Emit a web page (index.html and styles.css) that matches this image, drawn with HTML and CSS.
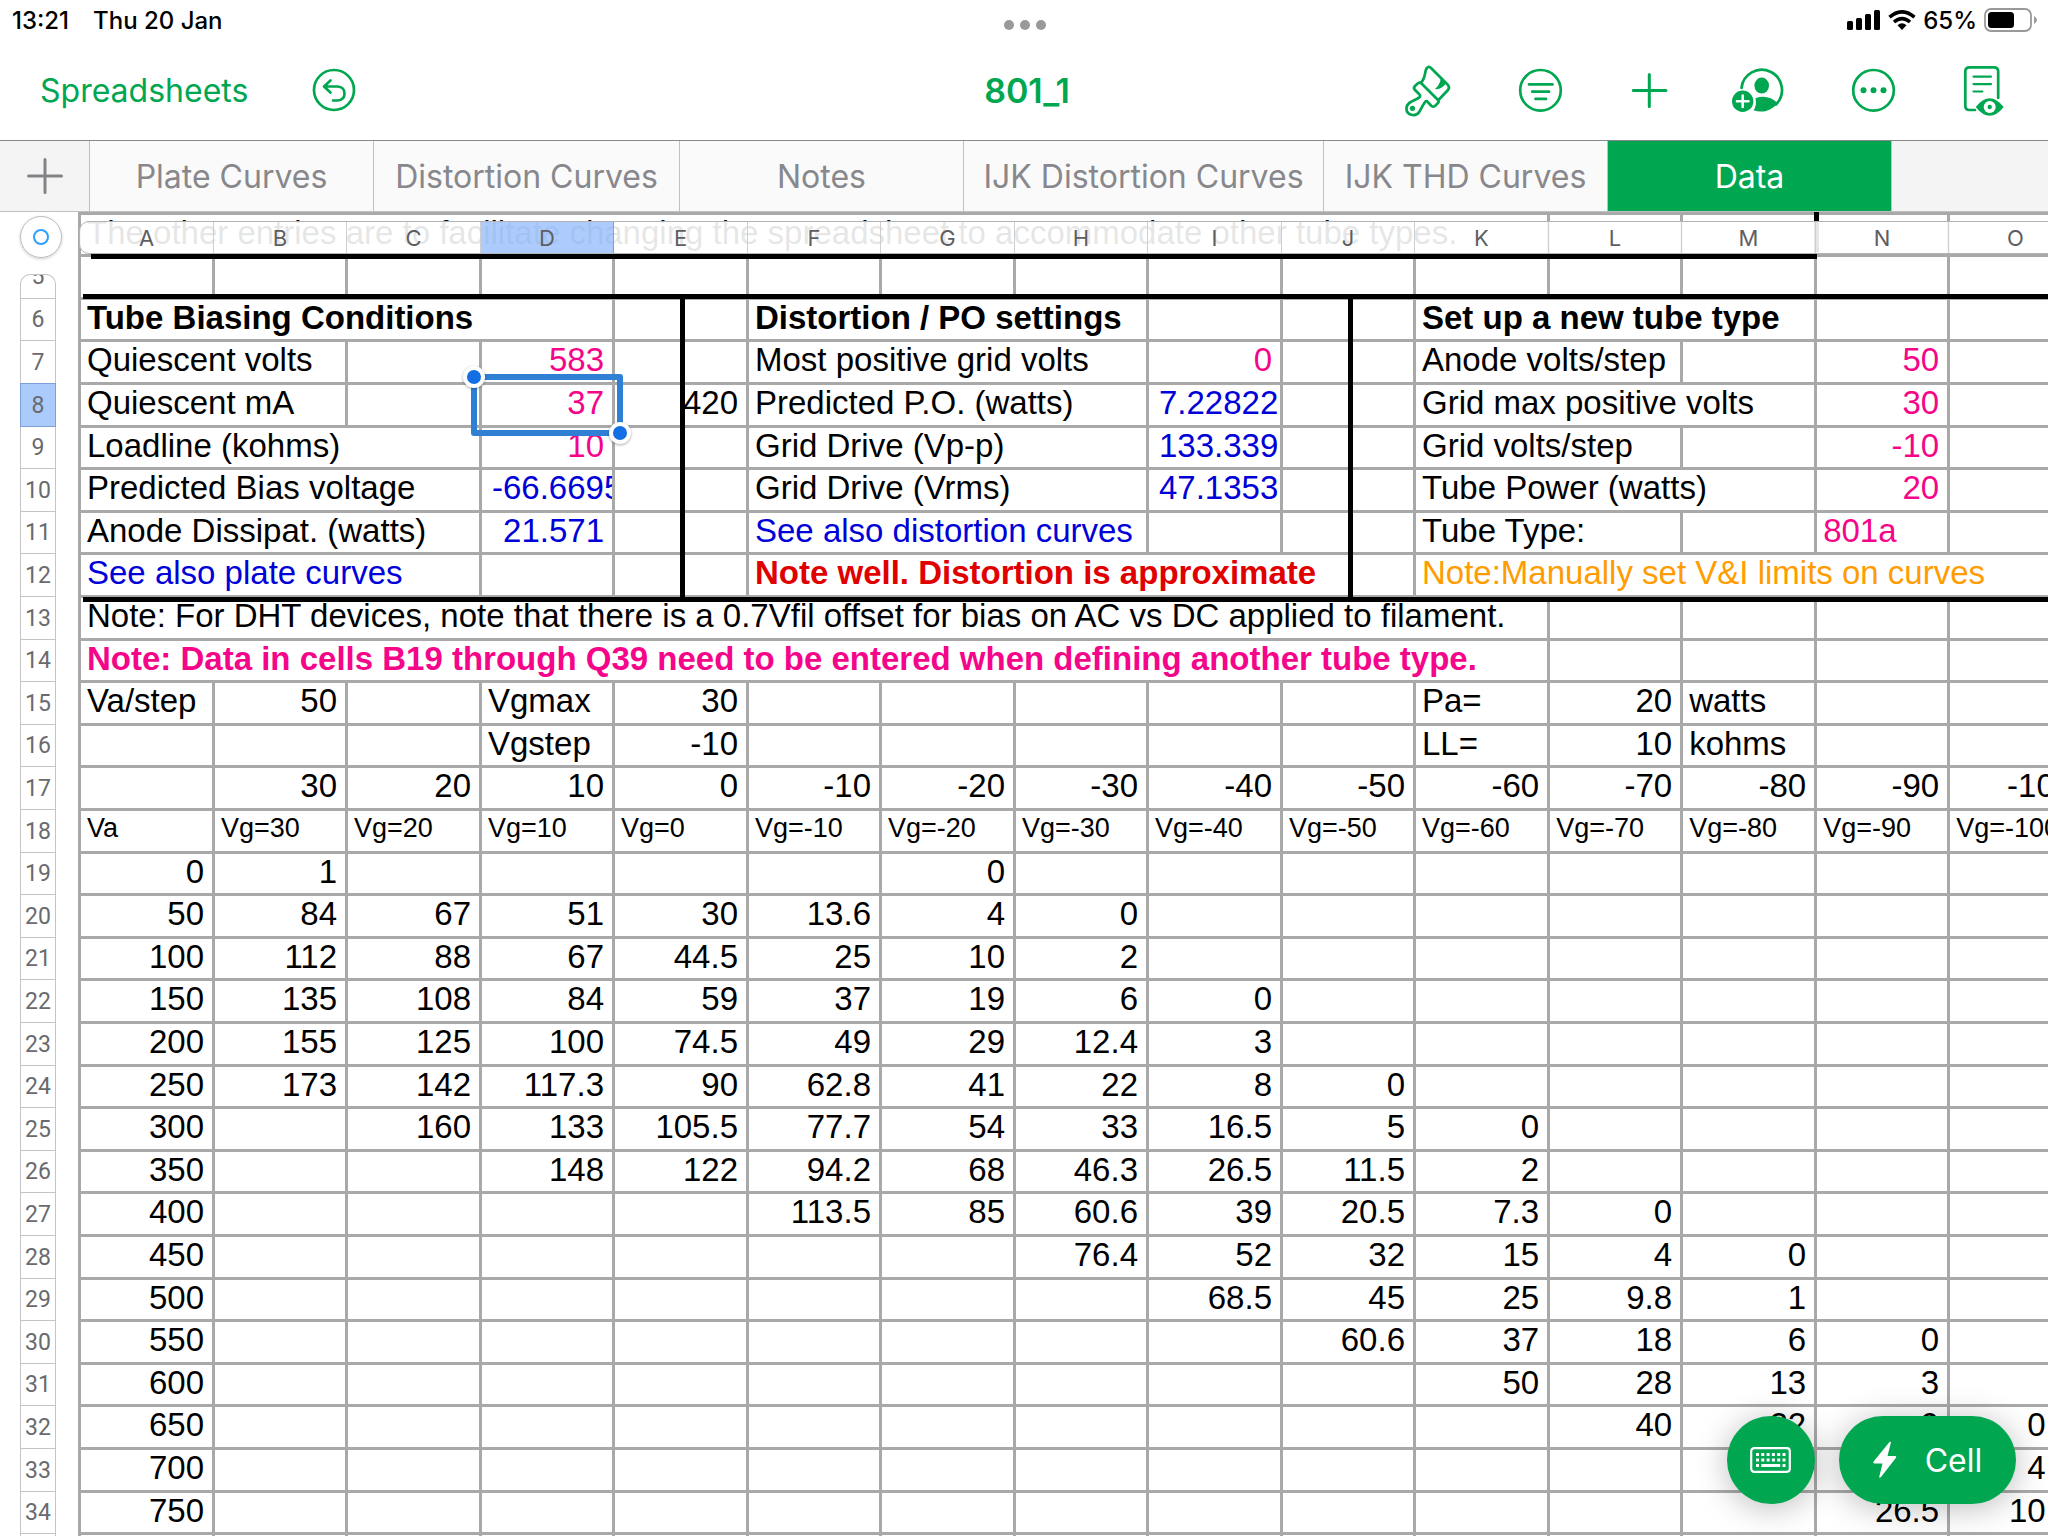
FILE: index.html
```html
<!DOCTYPE html>
<html lang="en">
<head>
<meta charset="utf-8">
<title>801_1</title>
<meta name="viewport" content="width=device-width">
<link rel="stylesheet" href="styles.css">
</head>
<body>
<div class="status">
  <div class="status-left"><span>13:21</span><span>Thu 20 Jan</span></div>
  <div class="status-dots"><i></i><i></i><i></i></div>
  <div class="status-right">
    <svg width="34" height="20" viewBox="0 0 34 20"><rect x="0" y="11" width="6" height="9" rx="1.5"/><rect x="9" y="8" width="6" height="12" rx="1.5"/><rect x="18" y="4" width="6" height="16" rx="1.5"/><rect x="27" y="0" width="6" height="20" rx="1.5"/></svg>
    <svg width="28" height="20" viewBox="0 0 28 20"><g fill="none" stroke="#000" stroke-width="3.6"><path d="M1.5 7.2Q14-3.5 26.500 7.200"/><path d="M6 12Q14 5.200 22 12"/></g><path d="M9.500 15.200Q14 11.400 18.500 15.200L14 20Z"/></svg>
    <span>65%</span>
    <svg width="54" height="24" viewBox="0 0 54 24"><rect x="1" y="1" width="46" height="22" rx="6" fill="none" stroke="#999" stroke-width="1.800"/><rect x="4" y="4" width="26" height="16" rx="3.500"/><path d="M50 8Q53 10 53 12T50 16Z" fill="#999"/></svg>
  </div>
</div>
<header class="toolbar">
  <div class="toolbar-left">
    <a class="back" href="#">Spreadsheets</a>
    <button class="tool" aria-label="Undo"><svg viewBox="0 0 60 60"><circle cx="30" cy="30" r="20"/><path d="M26.500 20.500L20 26.500L26.500 32.500M20.500 26.500H33.500Q40.500 27 40.500 33.500T33.500 40.500H29"/></svg></button>
  </div>
  <h1 class="title">801_1</h1>
  <div class="tools">
    <button class="tool" aria-label="Format"><svg viewBox="0 0 60 60"><path d="M22 22.500C26.500 18.500 25.500 12 27.500 8.500Q29.500 5.500 32 8L49 25Q51 27.500 49 30L39 40.500M20 34L16 30Q14 28 16 26L19 23.300Q20.800 21.800 22.500 23.500L39 40Q40.300 41.500 39 43L36 46Q34.300 47.300 32.500 46L28.500 41.800Q27 40.500 26 42C23.500 45.500 22.500 48.500 20.500 51.500C16.500 58 7 55 7.500 48C8 41 17 40.500 20.500 37.200Q22 35.800 20 34Z"/><path class="solid" d="M41 15.500Q43.500 22 36 29Q42 30 46.500 24Z"/><circle class="solid" cx="13.500" cy="48.300" r="2.600"/></svg></button>
    <button class="tool" aria-label="Filter"><svg viewBox="0 0 60 60"><circle cx="30.500" cy="30.300" r="20.300"/><path d="M19 24.400H42.500M22.300 31.700H39M25.500 38.900H36"/></svg></button>
    <button class="tool" aria-label="Insert"><svg viewBox="0 0 60 60"><path stroke-width="3" d="M28.300 14.400V46.500M12.300 30.400H45"/></svg></button>
    <button class="tool" aria-label="Share"><svg viewBox="0 0 60 60"><path d="M9.500 28A20.300 20.300 0 1 1 44 44.500"/><ellipse class="solid" cx="29.700" cy="25.600" rx="7.300" ry="8"/><path class="solid" d="M21.500 50.200Q25 46 23.500 38.200Q36 34 45.500 43A20.500 20.500 0 0 1 21.500 50.200Z"/><circle class="solid" cx="10.700" cy="41.300" r="10.700"/><path class="white" d="M10.700 35.500V47.100M4.900 41.300H16.500"/></svg></button>
    <button class="tool" aria-label="More"><svg viewBox="0 0 60 60"><circle cx="30.500" cy="30.300" r="20.300"/><circle class="solid" cx="20.500" cy="30.300" r="3"/><circle class="solid" cx="30.500" cy="30.300" r="3"/><circle class="solid" cx="40.500" cy="30.300" r="3"/></svg></button>
    <button class="tool" aria-label="Mobile view"><svg viewBox="0 0 60 60"><path d="M21 50H15.500Q11.300 50 11.300 45.800V11.500Q11.300 7.300 15.500 7.300H40Q44.200 7.300 44.200 11.500V38"/><path stroke-width="2.200" d="M19.500 16.600H37M19.500 24.100H37M19.500 31.500H28.300"/><path class="solid" d="M21.700 47Q35.700 29.500 49.700 47Q35.700 64.500 21.700 47Z"/><circle class="hole" cx="35.700" cy="47" r="6"/><circle class="solid" cx="35.700" cy="47" r="2.200"/></svg></button>
  </div>
</header>
<nav class="tabs">
  <button class="add" aria-label="Add sheet"><svg viewBox="0 0 36 36"><path d="M18 1.500V34.500M1.500 18H34.500" fill="none" stroke="#838387" stroke-width="3" stroke-linecap="round"/></svg></button>
  <button class="tab">Plate Curves</button>
  <button class="tab wide">Distortion Curves</button>
  <button class="tab">Notes</button>
  <button class="tab widest">IJK Distortion Curves</button>
  <button class="tab">IJK THD Curves</button>
  <button class="tab active">Data</button>
</nav>
<main class="sheet">
  <div class="gutter">
    <button class="select-all" aria-label="Select all"><i></i></button>
    <ol class="rows">
      <li class="cut"><span>5</span></li><li>6</li><li>7</li><li class="on">8</li><li>9</li><li>10</li><li>11</li><li>12</li><li>13</li><li>14</li><li>15</li><li>16</li><li>17</li><li>18</li><li>19</li><li>20</li><li>21</li><li>22</li><li>23</li><li>24</li><li>25</li><li>26</li><li>27</li><li>28</li><li>29</li><li>30</li><li>31</li><li>32</li><li>33</li><li>34</li><li></li>
    </ol>
  </div>
  <div class="canvas">
    <table>
      <colgroup><col><col><col><col><col><col><col><col><col><col><col><col><col><col><col></colgroup>
      <tbody>
        <tr><td class="t" colspan="11">The other entries are to facilitate changing the spreadsheet to accommodate other tube types.<td><td><td><td>
        <tr><td><td><td><td><td><td><td><td><td><td><td><td><td><td><td>
        <tr><td class="t b" colspan="4">Tube Biasing Conditions<td><td class="t b" colspan="3">Distortion / PO settings<td><td><td class="t b" colspan="3">Set up a new tube type<td><td>
        <tr><td class="t" colspan="2">Quiescent volts<td><td class="pink">583<td><td class="t" colspan="3">Most positive grid volts<td class="pink">0<td><td class="t" colspan="2">Anode volts/step<td><td class="pink">50<td>
        <tr><td class="t" colspan="2">Quiescent mA<td><td class="pink selected">37<span class="selection"></span><td>420<td class="t" colspan="3">Predicted P.O. (watts)<td class="blue clip">7.22822<td><td class="t" colspan="3">Grid max positive volts<td class="pink">30<td>
        <tr><td class="t" colspan="3">Loadline (kohms)<td class="pink">10<td><td class="t" colspan="3">Grid Drive (Vp-p)<td class="blue clip">133.339<td><td class="t" colspan="2">Grid volts/step<td><td class="pink">-10<td>
        <tr><td class="t" colspan="3">Predicted Bias voltage<td class="blue clip">-66.6695<td><td class="t" colspan="3">Grid Drive (Vrms)<td class="blue clip">47.1353<td><td class="t" colspan="3">Tube Power (watts)<td class="pink">20<td>
        <tr><td class="t" colspan="3">Anode Dissipat. (watts)<td class="blue">21.571<td><td class="t blue" colspan="3">See also distortion curves<td><td><td class="t" colspan="2">Tube Type:<td><td class="t pink">801a<td>
        <tr><td class="t blue" colspan="3">See also plate curves<td><td><td class="t b red" colspan="5">Note well. Distortion is approximate<td class="t orange" colspan="5">Note:Manually set V&amp;I limits on curves
        <tr><td class="t" colspan="11">Note: For DHT devices, note that there is a 0.7Vfil offset for bias on AC vs DC applied to filament.<td><td><td><td>
        <tr><td class="t b pink" colspan="11">Note: Data in cells B19 through Q39 need to be entered when defining another tube type.<td><td><td><td>
        <tr><td class="t">Va/step<td>50<td><td class="t">Vgmax<td>30<td><td><td><td><td><td class="t">Pa=<td>20<td class="t">watts<td><td>
        <tr><td><td><td><td class="t">Vgstep<td>-10<td><td><td><td><td><td class="t">LL=<td>10<td class="t">kohms<td><td>
        <tr><td><td>30<td>20<td>10<td>0<td>-10<td>-20<td>-30<td>-40<td>-50<td>-60<td>-70<td>-80<td>-90<td>-100
        <tr class="small"><td>Va<td>Vg=30<td>Vg=20<td>Vg=10<td>Vg=0<td>Vg=-10<td>Vg=-20<td>Vg=-30<td>Vg=-40<td>Vg=-50<td>Vg=-60<td>Vg=-70<td>Vg=-80<td>Vg=-90<td>Vg=-100
        <tr><td>0<td>1<td><td><td><td><td>0<td><td><td><td><td><td><td><td>
        <tr><td>50<td>84<td>67<td>51<td>30<td>13.6<td>4<td>0<td><td><td><td><td><td><td>
        <tr><td>100<td>112<td>88<td>67<td>44.5<td>25<td>10<td>2<td><td><td><td><td><td><td>
        <tr><td>150<td>135<td>108<td>84<td>59<td>37<td>19<td>6<td>0<td><td><td><td><td><td>
        <tr><td>200<td>155<td>125<td>100<td>74.5<td>49<td>29<td>12.4<td>3<td><td><td><td><td><td>
        <tr><td>250<td>173<td>142<td>117.3<td>90<td>62.8<td>41<td>22<td>8<td>0<td><td><td><td><td>
        <tr><td>300<td><td>160<td>133<td>105.5<td>77.7<td>54<td>33<td>16.5<td>5<td>0<td><td><td><td>
        <tr><td>350<td><td><td>148<td>122<td>94.2<td>68<td>46.3<td>26.5<td>11.5<td>2<td><td><td><td>
        <tr><td>400<td><td><td><td><td>113.5<td>85<td>60.6<td>39<td>20.5<td>7.3<td>0<td><td><td>
        <tr><td>450<td><td><td><td><td><td><td>76.4<td>52<td>32<td>15<td>4<td>0<td><td>
        <tr><td>500<td><td><td><td><td><td><td><td>68.5<td>45<td>25<td>9.8<td>1<td><td>
        <tr><td>550<td><td><td><td><td><td><td><td><td>60.6<td>37<td>18<td>6<td>0<td>
        <tr><td>600<td><td><td><td><td><td><td><td><td><td>50<td>28<td>13<td>3<td>
        <tr><td>650<td><td><td><td><td><td><td><td><td><td><td>40<td>22<td>9<td>0.5
        <tr><td>700<td><td><td><td><td><td><td><td><td><td><td><td><td><td>4.5
        <tr><td>750<td><td><td><td><td><td><td><td><td><td><td><td><td>26.5<td>10.5
        <tr><td><td><td><td><td><td><td><td><td><td><td><td><td><td><td>
      </tbody>
    </table>
    <i class="rule rule-n"></i>
    <div class="letters"><span>A</span><span>B</span><span>C</span><span class="on">D</span><span>E</span><span>F</span><span>G</span><span>H</span><span>I</span><span>J</span><span>K</span><span>L</span><span>M</span><span>N</span><span>O</span></div>
    <i class="rule rule-4"></i>
    <i class="rule rule-5"></i>
    <i class="rule rule-12"></i>
    <i class="rule rule-e"></i>
    <i class="rule rule-j"></i>
  </div>
</main>
<div class="actions">
  <button class="fab" aria-label="Keyboard"><svg width="42" height="26" viewBox="0 0 42 26"><rect x="1.200" y="1.200" width="38.600" height="23.600" rx="3" fill="none" stroke="#fff" stroke-width="2.200"/><path fill="none" stroke="#fff" stroke-width="3" stroke-dasharray="3 2.300" d="M6 7.500H36M6 13H36"/><path fill="none" stroke="#fff" stroke-width="3" d="M6 18.500H9M11.300 18.500H30.200M32.500 18.500H35.500"/></svg></button>
  <button class="fab pill"><svg width="24" height="38" viewBox="0 0 24 38"><path fill="#fff" d="M16.500 1Q18.300 0 17.800 2L14.500 15H22Q24 15.300 22.800 17L8 36Q6 37.800 6.300 35.500L9.500 22.500H1.500Q-.5 22 1 20Z"/></svg><span>Cell</span></button>
</div>
</body>
</html>
```
FILE: styles.css
```css
*, *::before, *::after { box-sizing: border-box; }

body {
  margin: 0;
  height: 100vh;
  overflow: hidden;
  position: relative;
  display: flex;
  flex-direction: column;
  background: #fff;
  font-family: Inter, Roboto, sans-serif;
  color: #000;
}

button {
  margin: 0;
  padding: 0;
  border: 0;
  background: none;
  font: inherit;
  color: inherit;
}

svg { display: block; }

/* status bar */
.status {
  height: 40px;
  flex: none;
  display: grid;
  grid-template-columns: 1fr auto 1fr;
  align-items: center;
  padding: 0 10px 0 12px;
  font-size: 24px;
  font-weight: 500;
}
.status-left { display: flex; gap: 24px; }
.status-dots { display: flex; gap: 6px; padding-top: 10px; }
.status-dots i { width: 10px; height: 10px; border-radius: 50%; background: #999; }
.status-right { display: flex; justify-content: flex-end; align-items: center; gap: 7px; }

/* toolbar */
.toolbar {
  height: 101px;
  flex: none;
  display: grid;
  grid-template-columns: 1fr auto 1fr;
  align-items: center;
  padding: 0 34px 0 40px;
  border-bottom: 1px solid #88888a;
  color: #00a650;
}
.toolbar-left { display: flex; align-items: center; gap: 56px; }
.back { font-size: 32px; color: inherit; text-decoration: none; }
.title { margin: 0; font-size: 34px; font-weight: 600; }
.tools { display: flex; justify-content: flex-end; gap: 51px; }
.tool { width: 60px; height: 60px; }
.tool svg {
  width: 60px;
  height: 60px;
  fill: none;
  stroke: #00a650;
  stroke-width: 2.7;
  stroke-linecap: round;
  stroke-linejoin: round;
}
.tool .solid { fill: #00a650; stroke: none; }
.tool .white { stroke: #fff; stroke-width: 2.5; }
.tool .hole { fill: #fff; stroke: none; }

/* sheet tabs */
.tabs {
  height: 71px;
  flex: none;
  display: flex;
  background: #f4f4f5;
  border-bottom: 1px solid #c0c0c2;
}
.add {
  width: 90px;
  display: grid;
  place-items: center;
  border-right: 1px solid #c0c0c2;
}
.add svg { width: 36px; height: 36px; }
.tab {
  width: 284px;
  background: #fafafa;
  border-right: 1px solid #c0c0c2;
  font-size: 32px;
  color: #88888c;
  white-space: nowrap;
}
.tab.wide { width: 306px; }
.tab.widest { width: 360px; }
.tab.active { background: #00a650; color: #fff; }

/* sheet */
.sheet { flex: 1; min-height: 0; overflow: hidden; display: flex; }

.gutter {
  width: 78px;
  flex: none;
  display: flex;
  flex-direction: column;
  padding: 4px 0 0 20px;
  color: #6a6a6e;
  font-family: Roboto, Inter, sans-serif;
  font-size: 23px;
}
.select-all {
  width: 42px;
  height: 42px;
  flex: none;
  display: grid;
  place-items: center;
  border: 1px solid #bdbdbf;
  border-radius: 50%;
  box-shadow: 0 1px 3px #0003;
}
.select-all i { width: 16px; height: 16px; border: 2px solid #2ea0ff; border-radius: 50%; }
.rows {
  list-style: none;
  margin: 16px 0 0;
  padding: 0;
  width: 36px;
  border: solid #c4c4c6;
  border-width: 1px 1px 0;
  border-radius: 10px 10px 0 0;
}
.rows li {
  height: 43px;
  display: flex;
  align-items: center;
  justify-content: center;
  border-bottom: 1px solid #c4c4c6;
}
.rows li:nth-child(5n+2), .rows li:nth-child(5n) { height: 42px; }
.rows .cut { height: 24px; overflow: hidden; align-items: flex-end; padding-bottom: 8px; border-radius: 10px 10px 0 0; }
.rows .on {
  margin: -1px -1px 0;
  height: 44px;
  background: #accbfd;
  border: 1px solid #7da0d8;
}

.canvas { position: relative; flex: 1; min-width: 0; overflow: hidden; }

table {
  table-layout: fixed;
  width: 0;
  border-collapse: separate;
  border-spacing: 0;
  border: solid #a9a9a9;
  border-width: 3px 0 0 3px;
  font-family: "Liberation Sans", Arial, sans-serif;
  font-size: 33px;
  line-height: 35px;
}
col { width: 134px; }
col:nth-child(even) { width: 133px; }
tr { height: 43px; }
tr:nth-child(5n+1), tr:nth-child(5n+3) { height: 42px; }
td {
  padding: 0 8px 0 6px;
  border: solid #a9a9a9;
  border-width: 0 3px 3px 0;
  text-align: right;
  vertical-align: top;
  white-space: nowrap;
}
.t { text-align: left; }
.b { font-weight: 700; }
.small td { font-size: 27px; text-align: left; }
.pink { color: #f5058a; }
.blue { color: #0000d8; }
.red { color: #e00000; }
.orange { color: #ff9c00; }
.clip { text-align: left; padding: 0 0 0 10px; overflow: hidden; }

.selected { position: relative; }
.selection {
  position: absolute;
  inset: -11px;
  z-index: 2;
  border: 6px solid #2f80d4;
  border-radius: 3px;
}
.selection::before, .selection::after {
  content: "";
  position: absolute;
  width: 22px;
  height: 22px;
  border: 4px solid #fff;
  border-radius: 50%;
  background: #136fe3;
  box-shadow: 0 1px 3px #0005;
}
.selection::before { left: -14px; top: -14px; }
.selection::after { right: -14px; bottom: -14px; }

/* column letters lie over the first visible row */
.letters {
  position: absolute;
  left: 1px;
  top: 9px;
  height: 33px;
  display: flex;
  background: #ffffffe6;
  border: 1px solid #b4b4b6;
  border-radius: 10px 0 0 10px;
  color: #5e5e62;
  font-size: 22px;
}
.letters span {
  width: 134px;
  flex: none;
  display: grid;
  place-items: center;
  border-right: 1px solid #cfcfd1;
}
.letters span:nth-child(even) { width: 133px; }
.letters .on { background: #77aafc99; border-color: #7da0d8; }

/* black frame lines */
.rule { position: absolute; background: #000; }
.rule-4 { left: 13px; width: 1726px; top: 42px; height: 5px; }
.rule-5 { left: 5px; right: 0; top: 82px; height: 5px; }
.rule-12 { left: 5px; right: 0; top: 385px; height: 5px; }
.rule-n { left: 1736px; width: 5px; top: 0; height: 40px; }
.rule-e { left: 602px; width: 5px; top: 87px; height: 298px; }
.rule-j { left: 1270px; width: 5px; top: 87px; height: 298px; }

/* floating buttons */
.actions { position: absolute; right: 32px; bottom: 32px; display: flex; gap: 24px; }
.fab {
  width: 88px;
  height: 88px;
  display: flex;
  align-items: center;
  justify-content: center;
  gap: 28px;
  border-radius: 44px;
  background: #00a650;
  color: #fff;
  font-size: 32px;
  box-shadow: 0 4px 32px #0004;
}
.pill { width: 177px; }
```
